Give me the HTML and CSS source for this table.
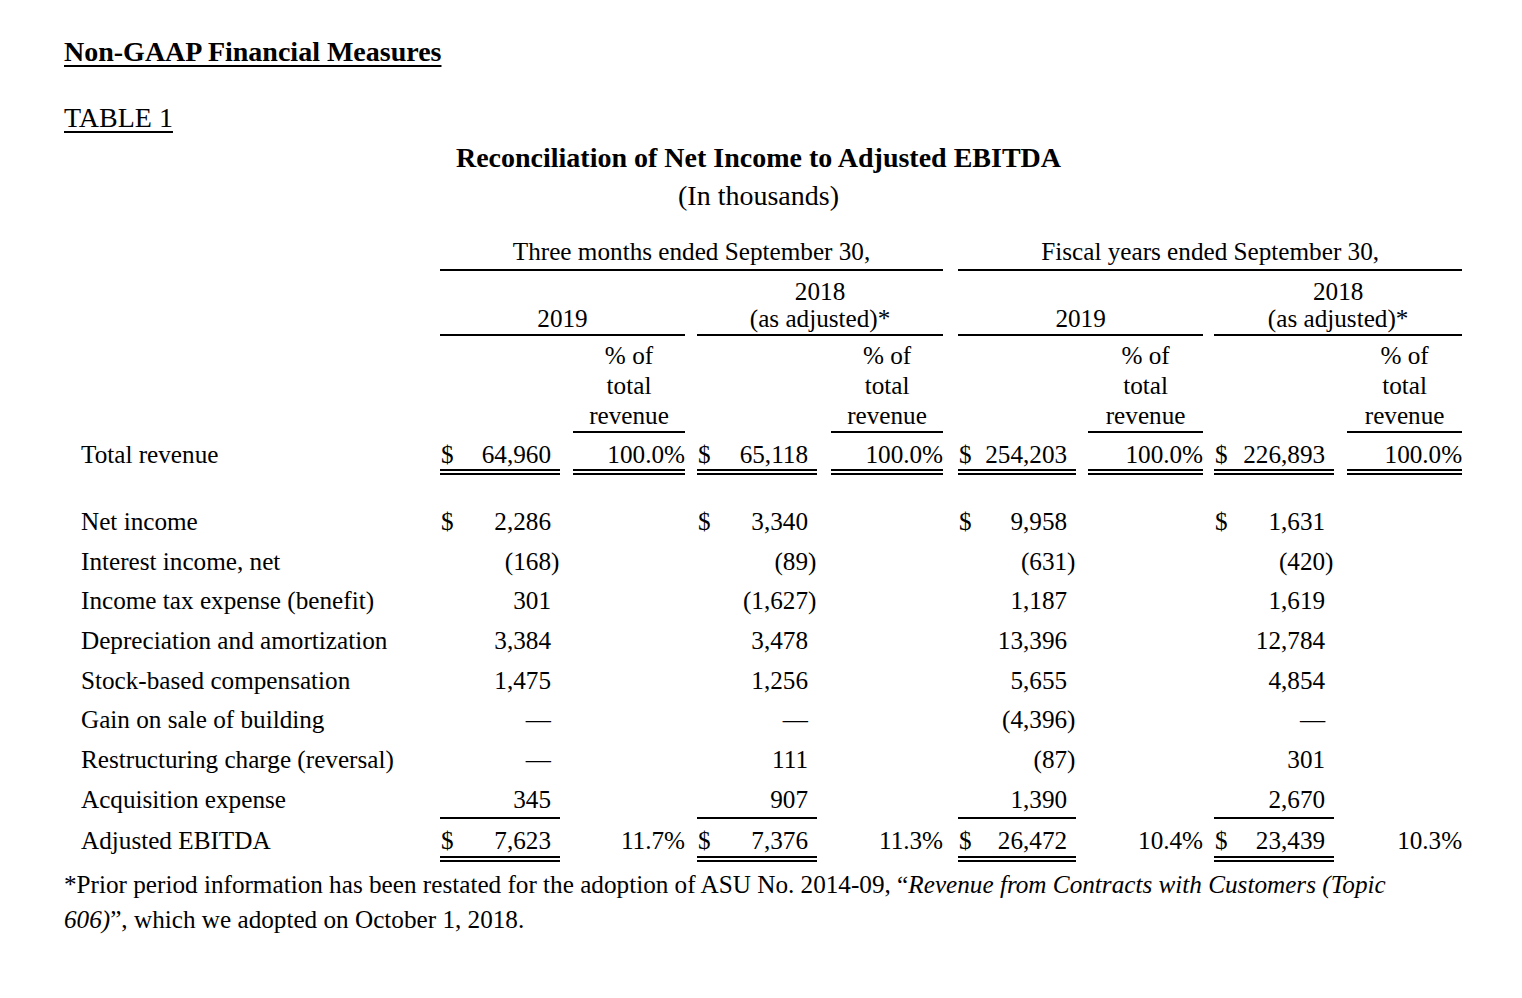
FILE: index.html
```html
<!DOCTYPE html>
<html lang="en">
<head>
<meta charset="utf-8">
<title>Non-GAAP Financial Measures</title>
<link rel="stylesheet" href="styles.css">
</head>
<body>
<div class="page">
  <h1 class="section">Non-GAAP Financial Measures</h1>
  <p class="tablenum">TABLE 1</p>
  <div class="caption">
    <div class="title">Reconciliation of Net Income to Adjusted EBITDA</div>
    <div class="sub">(In thousands)</div>
  </div>
  <table class="fin">
    <colgroup>
      <col class="c-label">
      <col class="c-amt"><col class="s13"><col class="c-pct"><col class="s12">
      <col class="c-amt"><col class="s14"><col class="c-pct"><col class="s15">
      <col class="c-amt2"><col class="s12"><col class="c-pct2"><col class="s11">
      <col class="c-amt"><col class="s13"><col class="c-pct2">
    </colgroup>
    <tbody>
      <tr class="r-group">
        <td></td>
        <td colspan="7" class="hd ul">Three months ended September 30,</td>
        <td></td>
        <td colspan="7" class="hd ul">Fiscal years ended September 30,</td>
      </tr>
      <tr class="r-year">
        <td></td>
        <td colspan="3" class="hd ul">2019</td>
        <td></td>
        <td colspan="3" class="hd ul">2018<br>(as adjusted)*</td>
        <td></td>
        <td colspan="3" class="hd ul">2019</td>
        <td></td>
        <td colspan="3" class="hd ul">2018<br>(as adjusted)*</td>
      </tr>
      <tr class="r-pct">
        <td></td>
        <td></td><td></td><td class="hd ul">% of<br>total<br>revenue</td><td></td>
        <td></td><td></td><td class="hd ul">% of<br>total<br>revenue</td><td></td>
        <td></td><td></td><td class="hd ul">% of<br>total<br>revenue</td><td></td>
        <td></td><td></td><td class="hd ul">% of<br>total<br>revenue</td>
      </tr>
      <tr class="r-total">
        <td class="lbl">Total revenue</td>
        <td class="amt dbl"><span class="cur">$</span>64,960</td><td></td><td class="pct dbl">100.0%</td><td></td>
        <td class="amt dbl"><span class="cur">$</span>65,118</td><td></td><td class="pct dbl">100.0%</td><td></td>
        <td class="amt dbl"><span class="cur">$</span>254,203</td><td></td><td class="pct dbl">100.0%</td><td></td>
        <td class="amt dbl"><span class="cur">$</span>226,893</td><td></td><td class="pct dbl">100.0%</td>
      </tr>
      <tr class="r-blank"><td colspan="16"></td></tr>
      <tr class="r-data">
        <td class="lbl">Net income</td>
        <td class="amt"><span class="cur">$</span>2,286</td><td></td><td></td><td></td>
        <td class="amt"><span class="cur">$</span>3,340</td><td></td><td></td><td></td>
        <td class="amt"><span class="cur">$</span>9,958</td><td></td><td></td><td></td>
        <td class="amt"><span class="cur">$</span>1,631</td><td></td><td></td>
      </tr>
      <tr class="r-data">
        <td class="lbl">Interest income, net</td>
        <td class="amt">(168<span class="rp">)</span></td><td></td><td></td><td></td>
        <td class="amt">(89<span class="rp">)</span></td><td></td><td></td><td></td>
        <td class="amt">(631<span class="rp">)</span></td><td></td><td></td><td></td>
        <td class="amt">(420<span class="rp">)</span></td><td></td><td></td>
      </tr>
      <tr class="r-data">
        <td class="lbl">Income tax expense (benefit)</td>
        <td class="amt">301</td><td></td><td></td><td></td>
        <td class="amt">(1,627<span class="rp">)</span></td><td></td><td></td><td></td>
        <td class="amt">1,187</td><td></td><td></td><td></td>
        <td class="amt">1,619</td><td></td><td></td>
      </tr>
      <tr class="r-data">
        <td class="lbl">Depreciation and amortization</td>
        <td class="amt">3,384</td><td></td><td></td><td></td>
        <td class="amt">3,478</td><td></td><td></td><td></td>
        <td class="amt">13,396</td><td></td><td></td><td></td>
        <td class="amt">12,784</td><td></td><td></td>
      </tr>
      <tr class="r-data">
        <td class="lbl">Stock-based compensation</td>
        <td class="amt">1,475</td><td></td><td></td><td></td>
        <td class="amt">1,256</td><td></td><td></td><td></td>
        <td class="amt">5,655</td><td></td><td></td><td></td>
        <td class="amt">4,854</td><td></td><td></td>
      </tr>
      <tr class="r-data">
        <td class="lbl">Gain on sale of building</td>
        <td class="amt">—</td><td></td><td></td><td></td>
        <td class="amt">—</td><td></td><td></td><td></td>
        <td class="amt">(4,396<span class="rp">)</span></td><td></td><td></td><td></td>
        <td class="amt">—</td><td></td><td></td>
      </tr>
      <tr class="r-data">
        <td class="lbl">Restructuring charge (reversal)</td>
        <td class="amt">—</td><td></td><td></td><td></td>
        <td class="amt">111</td><td></td><td></td><td></td>
        <td class="amt">(87<span class="rp">)</span></td><td></td><td></td><td></td>
        <td class="amt">301</td><td></td><td></td>
      </tr>
      <tr class="r-data r-acq">
        <td class="lbl">Acquisition expense</td>
        <td class="amt ul">345</td><td></td><td></td><td></td>
        <td class="amt ul">907</td><td></td><td></td><td></td>
        <td class="amt ul">1,390</td><td></td><td></td><td></td>
        <td class="amt ul">2,670</td><td></td><td></td>
      </tr>
      <tr class="r-sum">
        <td class="lbl">Adjusted EBITDA</td>
        <td class="amt dbl"><span class="cur">$</span>7,623</td><td></td><td class="pct">11.7%</td><td></td>
        <td class="amt dbl"><span class="cur">$</span>7,376</td><td></td><td class="pct">11.3%</td><td></td>
        <td class="amt dbl"><span class="cur">$</span>26,472</td><td></td><td class="pct">10.4%</td><td></td>
        <td class="amt dbl"><span class="cur">$</span>23,439</td><td></td><td class="pct">10.3%</td>
      </tr>
    </tbody>
  </table>
  <p class="note">*Prior period information has been restated for the adoption of ASU No. 2014-09, “<i>Revenue from Contracts with Customers (Topic 606)</i>”, which we adopted on October 1, 2018.</p>
</div>
</body>
</html>
```
FILE: styles.css
```css
* { box-sizing: border-box; }

body {
  margin: 0;
  background: #ffffff;
  color: #000000;
  font-family: "Liberation Serif", "Times New Roman", serif;
  font-size: 25.2px;
}

.page {
  width: 1462px;
  padding: 37px 0 0 64px;
}

.section {
  margin: 0;
  font-size: 28px;
  font-weight: bold;
  line-height: 30px;
  text-decoration: underline;
  text-decoration-thickness: 2px;
  text-underline-offset: 4px;
}

.tablenum {
  margin: 36px 0 0;
  font-size: 28px;
  line-height: 30px;
  text-decoration: underline;
  text-decoration-thickness: 2px;
  text-underline-offset: 4px;
}

.caption {
  margin-top: 6px;
  padding-right: 9px;
  text-align: center;
  font-size: 28px;
  line-height: 38px;
}

.caption .title { font-weight: bold; }

.fin {
  margin-top: 23px;
  width: 1398px;
  table-layout: fixed;
  border-collapse: separate;
  border-spacing: 0;
}

.c-label { width: 376px; }
.c-amt { width: 120px; }
.c-amt2 { width: 118px; }
.c-pct { width: 112px; }
.c-pct2 { width: 115px; }
.s11 { width: 11px; }
.s12 { width: 12px; }
.s13 { width: 13px; }
.s14 { width: 14px; }
.s15 { width: 15px; }

.fin td {
  padding: 0;
  vertical-align: bottom;
  white-space: nowrap;
}

.fin td.hd { text-align: center; }

.fin td.ul { border-bottom: 2px solid #000; }

.fin td.dbl { border-bottom: 6px double #000; }

.r-group td { line-height: 28px; padding-bottom: 3px; }

.r-year td { line-height: 27px; padding-top: 7px; padding-bottom: 2px; }

.r-pct td { line-height: 30px; padding-top: 5px; padding-bottom: 0; }

.r-total td { line-height: 28px; padding-top: 8px; padding-bottom: 0; vertical-align: top; }

.r-blank td { height: 27px; }

.r-data td {
  line-height: 30px;
  padding-top: 4.85px;
  padding-bottom: 4.85px;
  vertical-align: top;
}

.r-acq td { padding-bottom: 2.7px; }

.r-sum td { line-height: 30px; padding-top: 7px; padding-bottom: 0; vertical-align: top; }

.fin td.lbl { padding-left: 17px; }

.fin td.amt {
  text-align: right;
  padding-left: 1px;
  padding-right: 9px;
}

.fin td.pct { text-align: right; }

.cur { float: left; }

.rp { margin-right: -0.333em; }

.note {
  margin: 5px 0 0;
  width: 1370px;
  line-height: 35px;
}
```
